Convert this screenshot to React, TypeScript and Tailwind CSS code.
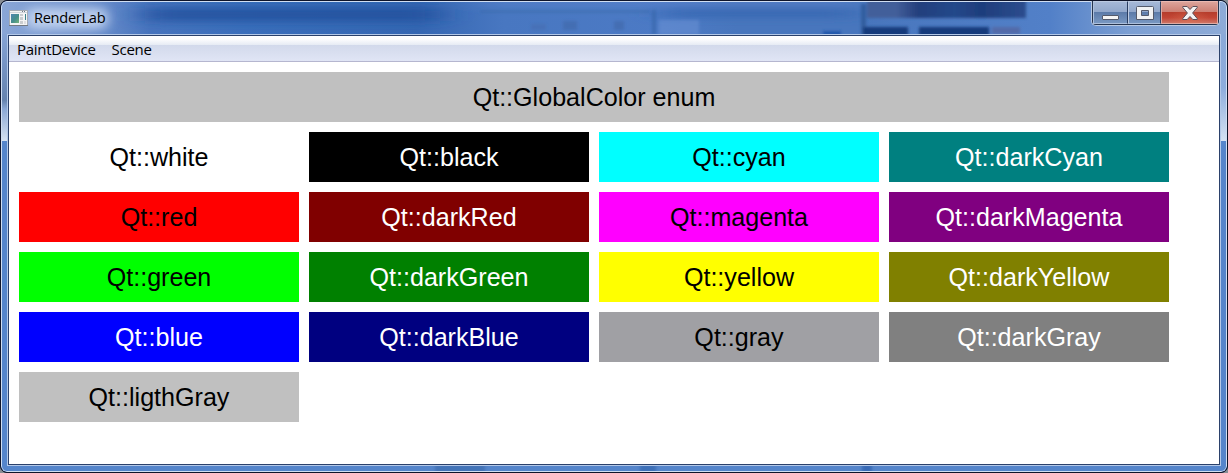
import React from 'react';

type Swatch = { name: string; style: string };

const swatches: Swatch[] = [
  { name: 'white', style: 'bg-white text-black' },
  { name: 'black', style: 'bg-black text-white' },
  { name: 'cyan', style: 'bg-[#00ffff] text-black' },
  { name: 'darkCyan', style: 'bg-[#008080] text-white' },
  { name: 'red', style: 'bg-[#ff0000] text-black' },
  { name: 'darkRed', style: 'bg-[#800000] text-white' },
  { name: 'magenta', style: 'bg-[#ff00ff] text-black' },
  { name: 'darkMagenta', style: 'bg-[#800080] text-white' },
  { name: 'green', style: 'bg-[#00ff00] text-black' },
  { name: 'darkGreen', style: 'bg-[#008000] text-white' },
  { name: 'yellow', style: 'bg-[#ffff00] text-black' },
  { name: 'darkYellow', style: 'bg-[#808000] text-white' },
  { name: 'blue', style: 'bg-[#0000ff] text-white' },
  { name: 'darkBlue', style: 'bg-[#000080] text-white' },
  { name: 'gray', style: 'bg-[#a0a0a4] text-black' },
  { name: 'darkGray', style: 'bg-[#808080] text-white' },
  { name: 'ligthGray', style: 'bg-[#c0c0c0] text-black' },
];

/** Blurred desktop scenery showing through the glass frame. */
function Glass() {
  return (
    <svg className="absolute inset-0 h-full w-full" viewBox="1 1 1226 471" preserveAspectRatio="none">
      <defs>
        <linearGradient id="bar" gradientUnits="userSpaceOnUse" x1="0" y1="0" x2="1228" y2="0">
          <stop offset="0" stopColor="#8aa6d6" />
          <stop offset="0.073" stopColor="#6f92cd" />
          <stop offset="0.122" stopColor="#4673bd" />
          <stop offset="0.2" stopColor="#3a6ebb" />
          <stop offset="0.34" stopColor="#3466b2" />
          <stop offset="0.41" stopColor="#4877c1" />
          <stop offset="0.54" stopColor="#4c7ac5" />
          <stop offset="0.6" stopColor="#4876bd" />
          <stop offset="0.7" stopColor="#4876bd" />
          <stop offset="0.855" stopColor="#5280c8" />
          <stop offset="0.92" stopColor="#7c9fd3" />
          <stop offset="1" stopColor="#8eabd7" />
        </linearGradient>
        <linearGradient id="left" x1="0" y1="0" x2="0" y2="1">
          <stop offset="0" stopColor="#86a4d5" />
          <stop offset="0.3" stopColor="#7593c3" />
          <stop offset="0.62" stopColor="#6683ae" />
          <stop offset="0.7" stopColor="#8aa7d4" />
          <stop offset="1" stopColor="#d6e2f2" />
        </linearGradient>
        <linearGradient id="right" x1="0" y1="0" x2="0" y2="1">
          <stop offset="0" stopColor="#8aa9d8" />
          <stop offset="0.5" stopColor="#8dacdc" />
          <stop offset="1" stopColor="#d5e2f3" />
        </linearGradient>
        <linearGradient id="panel" x1="0" y1="0" x2="1" y2="0">
          <stop offset="0" stopColor="#435f9a" />
          <stop offset="0.18" stopColor="#435f9a" />
          <stop offset="0.32" stopColor="#243f7d" />
          <stop offset="0.55" stopColor="#24488a" />
          <stop offset="0.72" stopColor="#1e3d7c" />
          <stop offset="1" stopColor="#2c4d8e" />
        </linearGradient>
        <filter id="soft" x="-50%" y="-100%" width="200%" height="300%">
          <feGaussianBlur stdDeviation="1.7" />
        </filter>
        <filter id="wide" x="-50%" y="-200%" width="200%" height="500%">
          <feGaussianBlur stdDeviation="16 4" />
        </filter>
        <filter id="glow" x="-50%" y="-100%" width="200%" height="300%">
          <feGaussianBlur stdDeviation="6 5" />
        </filter>
      </defs>
      <rect width="1228" height="473" fill="#5585cb" />
      <rect width="1228" height="35" fill="url(#bar)" />
      <g filter="url(#wide)">
        <rect x="145" y="8" width="295" height="13" fill="#1d4f9c" opacity="0.85" />
        <rect x="470" y="0" width="390" height="4" fill="#6387cf" opacity="0.8" />
        <rect x="660" y="9" width="195" height="8" fill="#2f62ae" opacity="0.8" />
      </g>
      <rect x="26" y="8" width="82" height="21" rx="8" fill="#c9d9f3" opacity="0.85" filter="url(#glow)" />
      <g filter="url(#soft)">
        <rect x="480" y="10" width="170" height="3" fill="#3568aa" opacity="0.5" />
        <rect x="531" y="24" width="15" height="6" fill="#426caf" opacity="0.6" />
        <rect x="563" y="21" width="14" height="9" fill="#426caf" opacity="0.8" />
        <rect x="614" y="21" width="10" height="9" fill="#426caf" opacity="0.8" />
        <rect x="652" y="10" width="4" height="25" fill="#3a68ae" opacity="0.8" />
        <rect x="659" y="20" width="40" height="15" fill="#6790d2" opacity="0.6" />
        <rect x="823" y="31" width="18" height="6" fill="#2459ac" />
        <rect x="861" y="4" width="5" height="31" fill="#315d9f" />
        <rect x="867" y="-6" width="159" height="24" fill="url(#panel)" />
        <rect x="863" y="27" width="45" height="12" fill="#173b7b" />
        <rect x="919" y="27" width="70" height="12" fill="#173b7b" />
        <rect x="992" y="27" width="28" height="7" fill="#536aa9" />
      </g>
      <rect y="34" width="10" height="107" fill="url(#left)" />
      <rect x="1217" y="34" width="11" height="107" fill="url(#right)" />
      <g filter="url(#soft)">
        <rect x="435" y="464" width="50" height="9" fill="#3c6caf" opacity="0.7" />
        <rect x="640" y="464" width="16" height="9" fill="#386bb3" opacity="0.8" />
        <rect x="862" y="464" width="10" height="9" fill="#376ab6" />
      </g>
    </svg>
  );
}

function AppIcon() {
  return (
    <svg width="19" height="17" viewBox="0 0 19 17" shapeRendering="crispEdges">
      <defs>
        <linearGradient id="preview" x1="0" y1="0" x2="1" y2="1">
          <stop offset="0" stopColor="#4f86b1" />
          <stop offset="0.55" stopColor="#468f8b" />
          <stop offset="1" stopColor="#76b37b" />
        </linearGradient>
      </defs>
      <rect x="0" y="0" width="19" height="16" fill="#a5abb3" />
      <rect x="1" y="1" width="17" height="14" fill="#f4f4f4" />
      <path d="M13 1h1v1h-1zM15 1h1v1h-1z" fill="#6f7b87" />
      <rect x="1" y="2" width="17" height="1" fill="#d1d5da" />
      <rect x="2" y="4" width="8" height="9" fill="url(#preview)" />
      <path d="M11 4h3v2h-3zM11 7h3v3h-3zM11 11h3v3h-3z" fill="#c9cccf" />
      <path d="M15 11h2v3h-2z" fill="#dedfe1" />
      <rect x="16" y="4" width="1" height="6" fill="#3c848c" />
      <rect x="0" y="15" width="19" height="1" fill="#737a83" />
    </svg>
  );
}

function CaptionButtons() {
  return (
    <div className="mr-px flex h-[25px] w-[129px] overflow-hidden rounded-b-[5px] border border-t-0 border-[#b9cae3] bg-[#26354f] px-px pb-px">
      <div className="flex w-[35px] items-center justify-center border border-r-[#293d60] border-b-[#adc0dc] border-l-[#adc0dc] border-t-[#bccae1] bg-[linear-gradient(180deg,#a5b8d7_0%,#91a7ca_48%,#5c7ba9_50%,#7897c1_100%)]">
        <svg width="17" height="18" viewBox="0 0 17 18">
          <rect x="0.5" y="11.5" width="16" height="4" rx="0.5" fill="#f4f4f4" stroke="#545a6a" />
        </svg>
      </div>
      <div className="flex w-[33px] items-center justify-center border border-r-[#334462] border-b-[#adc0dc] border-l-[#bccae1] border-t-[#bccae1] bg-[linear-gradient(180deg,#a5b8d7_0%,#91a7ca_48%,#5c7ba9_50%,#7897c1_100%)]">
        <svg width="18" height="16" viewBox="0 0 18 16">
          <path d="M1.500 1.500h15a1 1 0 0 1 1 1v12h-17v-12a1 1 0 0 1 1-1zM5.500 5.500v5h7v-5z" fill="#f1f2f3" fillRule="evenodd" stroke="#545a6a" />
        </svg>
      </div>
      <div className="flex w-[57px] items-center justify-center border border-[#e0aaa2] border-t-[#eab9b1] bg-[radial-gradient(ellipse_at_50%_100%,#df765680_0%,transparent_55%),linear-gradient(180deg,#dca39a_0%,#cd8074_46%,#b63d2c_50%,#c34635_75%,#cc7365_100%)]">
        <svg width="16" height="14" viewBox="0 0 16 14">
          <path d="M.8.5h4.400L8 3.500 10.800.5h4.400v1L10.600 7l4.600 5.500v1h-4.400L8 10.500l-2.800 3H.8v-1L5.400 7 .8 1.500z" fill="#f4f3f3" stroke="#5c4e58" />
        </svg>
      </div>
    </div>
  );
}

export default function App() {
  return (
    <div className="h-[473px] w-[1228px] overflow-hidden bg-[#888d94]">
      <div className="h-full w-full overflow-hidden rounded-[7px] border border-[#0e142a] bg-[#111a33]">
        <div className="relative flex h-full w-full flex-col overflow-hidden rounded-[6px] px-[6px] pb-[6px]">
          <Glass />
          <div className="absolute inset-0 rounded-[6px] border border-[#d0def2]" />
          <header className="relative flex h-[33px] shrink-0 items-start justify-between">
            <div className="flex h-full items-center gap-[6px] pl-[2px] pt-[1px]">
              <AppIcon />
              <span className="whitespace-nowrap pb-[2px] font-['Open_Sans','Noto_Sans',sans-serif] text-[14.600px] leading-[20px] tracking-[-0.02em] text-black">
                RenderLab
              </span>
            </div>
            <CaptionButtons />
          </header>
          <main className="relative min-h-0 flex-1 border border-[#b3c8e8]">
            <div className="flex h-full flex-col border border-[#2b416b] bg-white">
              <nav className="flex h-[26px] shrink-0 items-center gap-[16px] border-b border-[#b5b6cf] bg-[linear-gradient(180deg,#ffffff_0px,#fdfdfe_3px,#e6ebf4_9px,#d2d9eb_9px,#e0e5f5_25px)] pl-[8px] font-['Open_Sans','Noto_Sans',sans-serif] text-[15px] leading-[20px] tracking-[-0.02em] text-black">
                <span>PaintDevice</span>
                <span>Scene</span>
              </nav>
              <section className="grid grid-cols-[repeat(4,280px)] gap-[10px] p-[10px] font-['Liberation_Sans',Arial,sans-serif] text-[25.100px] leading-[50px]">
                <h1 className="col-span-4 h-[50px] bg-[#c0c0c0] text-center text-black">Qt::GlobalColor enum</h1>
                {swatches.map(({ name, style }) => (
                  <div key={name} className={`h-[50px] text-center ${style}`}>
                    Qt::{name}
                  </div>
                ))}
              </section>
            </div>
          </main>
        </div>
      </div>
    </div>
  );
}
